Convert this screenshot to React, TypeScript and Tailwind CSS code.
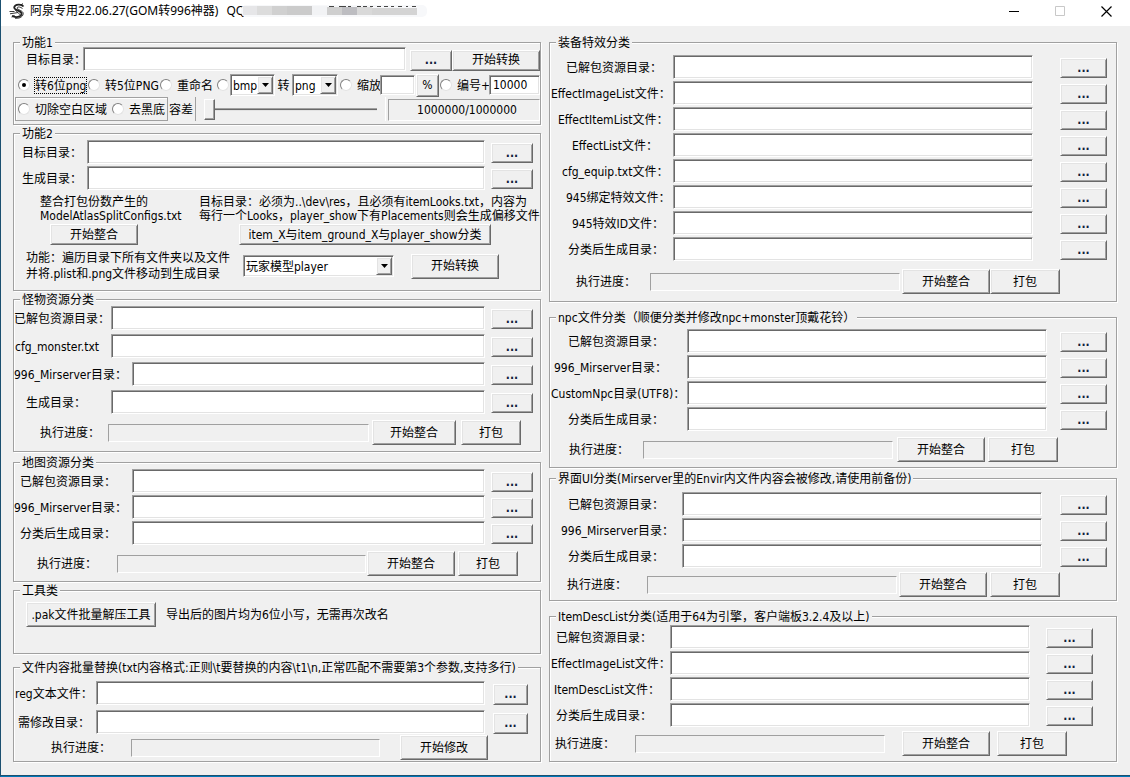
import { useId, useState } from "react";
import type { ReactNode } from "react";
import clsx from "clsx";

const raised =
  "border border-t-white border-l-white border-r-[#696969] border-b-[#696969] bg-[#f0f0f0] shadow-[inset_1px_1px_0_#e3e3e3,inset_-1px_-1px_0_#a0a0a0]";
const sunken =
  "border border-t-[#a0a0a0] border-l-[#a0a0a0] border-r-white border-b-white bg-white shadow-[inset_1px_1px_0_#696969,inset_-1px_-1px_0_#e3e3e3]";
const thinSunken =
  "border border-t-[#a0a0a0] border-l-[#a0a0a0] border-r-white border-b-white bg-[#f0f0f0]";

interface GroupProps {
  title: string;
  className?: string;
  children: ReactNode;
}

const Group = ({ title, className, children }: GroupProps) => (
  <fieldset
    className={clsx(
      "min-w-0 border border-[#a0a0a0] shadow-[1px_1px_0_#fff,inset_1px_1px_0_#fff]",
      className
    )}
  >
    <legend className="ml-1.5 h-[9px] bg-[#f0f0f0] px-0.5 leading-[11px] whitespace-nowrap">
      {title}
    </legend>
    {children}
  </fieldset>
);

interface PushButtonProps {
  className?: string;
  children: ReactNode;
}

const PushButton = ({ className, children }: PushButtonProps) => (
  <button
    type="button"
    className={clsx("shrink-0 text-center whitespace-nowrap active:bg-[#e5e5e5]", raised, className)}
  >
    {children}
  </button>
);

interface FieldProps {
  label: string;
  labelClass: string;
  browseClass: string;
}

const Field = ({ label, labelClass, browseClass }: FieldProps) => {
  const id = useId();

  return (
    <div className="flex items-center">
      <label htmlFor={id} className={clsx("shrink-0 pt-0.5 whitespace-nowrap", labelClass)}>
        {label}
      </label>
      <input id={id} type="text" className={clsx("h-6 min-w-0 flex-1 px-1 outline-none", sunken)} />
      <PushButton className={clsx("mt-0.5 font-bold text-[#10203c]", browseClass)}>...</PushButton>
    </div>
  );
};

interface ProgressRowProps {
  className: string;
  labelClass: string;
  children: ReactNode;
}

const ProgressRow = ({ className, labelClass, children }: ProgressRowProps) => {
  const id = useId();

  return (
    <div className={clsx("flex h-[25px] items-center", className)}>
      <label htmlFor={id} className={clsx("shrink-0 whitespace-nowrap", labelClass)}>
        执行进度：
      </label>
      <progress
        id={id}
        value={0}
        max={100}
        className={clsx(
          "h-[18px] min-w-0 flex-1 appearance-none [&::-webkit-progress-bar]:bg-transparent [&::-webkit-progress-value]:bg-[#0078d7]",
          thinSunken
        )}
      />
      {children}
    </div>
  );
};

interface RadioProps {
  name: string;
  className?: string;
  label?: string;
  ariaLabel?: string;
  checked: boolean;
  focused?: boolean;
  onChange: () => void;
}

const Radio = ({ name, className, label, ariaLabel, checked, focused, onChange }: RadioProps) => (
  <label className={clsx("flex shrink-0 items-center gap-1 whitespace-nowrap", className)}>
    <input
      type="radio"
      name={name}
      aria-label={ariaLabel}
      checked={checked}
      onChange={onChange}
      className="grid size-3 shrink-0 appearance-none place-items-center rounded-full border border-t-[#808080] border-r-[#e3e3e3] border-b-[#e3e3e3] border-l-[#808080] bg-white outline-none before:size-1 before:rounded-full checked:before:bg-black"
    />
    {label && (
      <span className={clsx("border border-dotted pt-px", focused ? "border-black" : "border-transparent")}>
        {label}
      </span>
    )}
  </label>
);

interface ComboProps {
  label: string;
  options: string[];
  className: string;
}

const Combo = ({ label, options, className }: ComboProps) => (
  <span className={clsx("relative flex h-[22px] shrink-0 items-stretch", className)}>
    <select aria-label={label} className={clsx("w-full appearance-none pt-0.5 pl-0.5 outline-none", sunken)}>
      {options.map((o) => (
        <option key={o}>{o}</option>
      ))}
    </select>
    <span
      className={clsx(
        "pointer-events-none absolute top-0.5 right-0.5 bottom-0.5 flex w-4 items-center justify-center",
        raised
      )}
    >
      <svg width="7" height="4" viewBox="0 0 7 4" aria-hidden="true">
        <path d="M0 0h7L3.5 4z" fill="#000" />
      </svg>
    </span>
  </span>
);

const Logo = () => (
  <svg width="17" height="17" viewBox="0 0 17 17" fill="none" stroke="#222" aria-hidden="true">
    <path
      d="M14.5 3.5C12.5.8 6 1 5.2 4.2c-.7 3 7.6 3.2 7.4 6.6-.2 3.500-6.500 4.200-9.600 2"
      strokeWidth="1.800"
    />
    <path d="M13.500 5.500C11 3.600 8.200 3.500 8.200 5c.2 2 6.300 2.500 6 5.800-.4 3.700-5.200 5-8.200 4.400" strokeWidth=".9" />
    <path d="M.5 8.500h5M1 10.800l8-1.300M6 6.800l5 4.800M3 14.500l2.500-2.500M12 2l2-1.500" strokeWidth=".9" />
  </svg>
);

const Mosaic = () => (
  <svg width="186" height="12" viewBox="0 0 186 12" aria-hidden="true">
    <rect width="186" height="12" rx="5" fill="#f7f8fa" />
    <path d="M2 1h14v9H2z" fill="#e6e6e8" />
    <path d="M16 1h15v9H16z" fill="#dcdcdc" />
    <path d="M31 1h15v9H31z" fill="#d0d0d0" />
    <path d="M46 1h25v9H46z" fill="#cbcbcb" />
    <path d="M71 1h15v9H71z" fill="#f2f3f5" />
    <path d="M86 2h15v8H86z" fill="#cfcfcf" />
    <path d="M101 2h15v8h-15z" fill="#bdbdc1" />
    <path d="M116 2h15v8h-15z" fill="#d9d9d9" />
    <path d="M131 3h45v7h-45z" fill="#d4d4d4" />
    <path
      d="M88 1.500h5M98 1.500h7M107 1.500h3M116 1.500h4M122 1.500h4M129 1.500h3M136 1.500h4M143 1.500h4M150 1.500h3M157 1.500h4M165 1.500h2M171 1.500h4"
      stroke="#444"
      strokeWidth="1"
    />
  </svg>
);

const TitleBar = () => (
  <header className="flex h-[26px] items-center bg-white pr-px pb-1 pl-2">
    <Logo />
    <h1 className="ml-1 font-['Noto_Sans','Noto_Sans_CJK_SC',sans-serif] whitespace-pre">
      阿泉专用22.06.27(GOM转996神器)
    </h1>
    <span className="ml-2 font-['Noto_Sans','Noto_Sans_CJK_SC',sans-serif]">QQ</span>
    <span className="-ml-1">
      <Mosaic />
    </span>
    <div className="ml-auto flex h-full items-center">
      <button type="button" aria-label="最小化" className="flex h-full w-[46px] items-center justify-center">
        <svg width="10" height="10" stroke="#000" aria-hidden="true">
          <path d="M0 5.500h10" />
        </svg>
      </button>
      <button type="button" aria-label="最大化" disabled className="flex h-full w-[46px] items-center justify-center">
        <svg width="10" height="10" fill="none" stroke="#c8c8c8" aria-hidden="true">
          <path d="M.5.5h9v9h-9z" />
        </svg>
      </button>
      <button type="button" aria-label="关闭" className="flex h-full w-[46px] items-center justify-center">
        <svg width="11" height="11" stroke="#000" strokeWidth="1.200" aria-hidden="true">
          <path d="M.5.5l10 10M10.500.5l-10 10" />
        </svg>
      </button>
    </div>
  </header>
);

const ConvertGroup = () => {
  const [mode, setMode] = useState("png6");
  const [trim, setTrim] = useState("");
  const [tolerance, setTolerance] = useState(0);

  return (
    <Group title="功能1" className="pb-[3px]">
      <div className="flex items-center pl-3">
        <label htmlFor="convert-dir" className="w-[57px] shrink-0 pt-0.5 whitespace-nowrap">
          目标目录：
        </label>
        <input id="convert-dir" type="text" className={clsx("h-6 min-w-0 flex-1 px-1 outline-none", sunken)} />
        <PushButton className="mt-0.5 ml-1 h-[21px] w-[42px] font-bold text-[#10203c]">...</PushButton>
        <PushButton className="mt-0.5 h-[21px] w-[88px]">开始转换</PushButton>
      </div>

      <div className="mt-[3px] flex h-[22px] items-center pl-1">
        <Radio
          name="mode"
          className="w-[70px]"
          label="转6位png"
          checked={mode === "png6"}
          focused={mode === "png6"}
          onChange={() => setMode("png6")}
        />
        <Radio
          name="mode"
          className="w-[72px]"
          label="转5位PNG"
          checked={mode === "png5"}
          onChange={() => setMode("png5")}
        />
        <Radio
          name="mode"
          className="w-[57px]"
          label="重命名"
          checked={mode === "rename"}
          onChange={() => setMode("rename")}
        />
        <Radio
          name="mode"
          className="w-[13px]"
          ariaLabel="转换格式"
          checked={mode === "format"}
          onChange={() => setMode("format")}
        />
        <Combo label="源格式" options={["bmp", "png", "jpg"]} className="w-[45px]" />
        <span className="w-[17px] shrink-0 pt-0.5 text-center">转</span>
        <Combo label="目标格式" options={["png", "bmp", "jpg"]} className="w-[46px]" />
        <Radio
          name="mode"
          className="ml-0.5 w-10"
          label="缩放"
          checked={mode === "scale"}
          onChange={() => setMode("scale")}
        />
        <input type="text" aria-label="缩放比例" className={clsx("h-5 w-[35px] shrink-0 px-1 outline-none", sunken)} />
        <PushButton className="mx-px h-[23px] w-[23px]">%</PushButton>
        <Radio
          name="mode"
          className="w-[49px]"
          label="编号+"
          checked={mode === "number"}
          onChange={() => setMode("number")}
        />
        <input
          type="text"
          aria-label="起始编号"
          defaultValue="10000"
          className={clsx("h-5 min-w-0 flex-1 px-[3px] outline-none", sunken)}
        />
      </div>

      <div className="mt-px flex h-6 items-center pl-px">
        <div className="flex h-full w-[153px] shrink-0 items-center border border-[#a0a0a0] pl-0.5 shadow-[inset_1px_1px_0_#fff]">
          <Radio
            name="trim"
            className="w-[94px]"
            label="切除空白区域"
            checked={trim === "blank"}
            onChange={() => setTrim("blank")}
          />
          <Radio
            name="trim"
            label="去黑底"
            checked={trim === "black"}
            onChange={() => setTrim("black")}
          />
        </div>
        <label htmlFor="tolerance" className="w-[27px] shrink-0 pt-0.5 pl-px whitespace-nowrap">
          容差
        </label>
        <div className="flex h-full min-w-0 flex-1 items-center border-r border-l border-r-white border-l-[#a0a0a0] px-2">
          <input
            id="tolerance"
            type="range"
            min={0}
            max={100}
            value={tolerance}
            onChange={(e) => setTolerance(Number(e.target.value))}
            className="h-[22px] w-full appearance-none bg-transparent outline-none [&::-webkit-slider-runnable-track]:h-[3px] [&::-webkit-slider-runnable-track]:border-t [&::-webkit-slider-runnable-track]:border-b [&::-webkit-slider-runnable-track]:border-t-[#a0a0a0] [&::-webkit-slider-runnable-track]:border-b-[#e3e3e3] [&::-webkit-slider-runnable-track]:bg-[#696969] [&::-webkit-slider-thumb]:-mt-[10px] [&::-webkit-slider-thumb]:h-[21px] [&::-webkit-slider-thumb]:w-[11px] [&::-webkit-slider-thumb]:appearance-none [&::-webkit-slider-thumb]:border [&::-webkit-slider-thumb]:border-t-white [&::-webkit-slider-thumb]:border-r-[#696969] [&::-webkit-slider-thumb]:border-b-[#696969] [&::-webkit-slider-thumb]:border-l-white [&::-webkit-slider-thumb]:bg-[#f0f0f0] [&::-webkit-slider-thumb]:shadow-[inset_-1px_-1px_0_#a0a0a0]"
          />
        </div>
        <output
          htmlFor="tolerance"
          className={clsx("mt-0.5 ml-0.5 h-[22px] w-[152px] shrink-0 pl-1.5 text-center leading-5", thinSunken)}
        >
          1000000/1000000
        </output>
      </div>
    </Group>
  );
};

const PackGroup = () => (
  <Group title="功能2" className="pt-0.5 pb-2">
    <div className="flex flex-col gap-0.5">
      <Field label="目标目录：" labelClass="w-[73px] pl-2" browseClass="ml-1.5 mr-[7px] h-5 w-[42px]" />
      <Field label="生成目录：" labelClass="w-[73px] pl-2" browseClass="ml-1.5 mr-[7px] h-5 w-[42px]" />
    </div>
    <div className="mt-[5px] flex pl-[26px] leading-[14px] whitespace-nowrap">
      <p className="w-[159px] shrink-0">
        整合打包份数产生的
        <br />
        ModelAtlasSplitConfigs.txt
      </p>
      <p>
        目标目录：必须为..\dev\res，且必须有itemLooks.txt，内容为
        <br />
        每行一个Looks，player_show下有Placements则会生成偏移文件
      </p>
    </div>
    <div className="mt-px flex justify-between pr-[49px] pl-9">
      <PushButton className="h-[21px] w-[88px]">开始整合</PushButton>
      <PushButton className="h-[21px] w-[252px]">item_X与item_ground_X与player_show分类</PushButton>
    </div>
    <div className="mt-[5px] flex items-center pl-3">
      <p className="w-[217px] shrink-0 leading-4 whitespace-nowrap">
        功能：遍历目录下所有文件夹以及文件
        <br />
        并将.plist和.png文件移动到生成目录
      </p>
      <Combo label="模型类型" options={["玩家模型player", "怪物模型monster"]} className="w-[151px]" />
      <PushButton className="mr-[41px] ml-auto h-[25px] w-[88px]">开始转换</PushButton>
    </div>
  </Group>
);

const MonsterGroup = () => (
  <Group title="怪物资源分类" className="mb-0.5 pt-0.5 pb-1.5">
    <div className="flex flex-col gap-1">
      <Field label="已解包资源目录：" labelClass="w-[97px]" browseClass="ml-1.5 mr-[7px] h-5 w-[42px]" />
      <Field label="cfg_monster.txt" labelClass="w-[97px] pl-px" browseClass="ml-1.5 mr-[7px] h-5 w-[42px]" />
      <Field label="996_Mirserver目录：" labelClass="w-[118px]" browseClass="ml-1.5 mr-[7px] h-5 w-[42px]" />
      <Field label="生成目录：" labelClass="w-[97px] pl-3" browseClass="ml-1.5 mr-[7px] h-5 w-[42px]" />
    </div>
    <ProgressRow className="mt-1.5 pr-[19px]" labelClass="w-[94px] pl-[26px]">
      <PushButton className="ml-[3px] h-full w-[84px]">开始整合</PushButton>
      <PushButton className="ml-[5px] h-full w-[60px]">打包</PushButton>
    </ProgressRow>
  </Group>
);

const MapGroup = () => (
  <Group title="地图资源分类" className="pt-0.5 pb-[5px]">
    <div className="flex flex-col gap-0.5">
      <Field label="已解包资源目录：" labelClass="w-[118px] pl-1.5" browseClass="ml-1.5 mr-[7px] h-5 w-[42px]" />
      <Field label="996_Mirserver目录：" labelClass="w-[118px]" browseClass="ml-1.5 mr-[7px] h-5 w-[42px]" />
      <Field label="分类后生成目录：" labelClass="w-[118px] pl-1.5" browseClass="ml-1.5 mr-[7px] h-5 w-[42px]" />
    </div>
    <ProgressRow className="mt-1.5 pr-[22px]" labelClass="w-[103px] pl-[23px]">
      <PushButton className="ml-px h-full w-[88px]">开始整合</PushButton>
      <PushButton className="ml-[3px] h-full w-[60px]">打包</PushButton>
    </ProgressRow>
  </Group>
);

const ToolGroup = () => (
  <Group title="工具类" className="mb-[5px] pt-[7px] pb-[26px]">
    <div className="flex items-center pl-3">
      <PushButton className="h-[25px] w-[130px]">.pak文件批量解压工具</PushButton>
      <p className="ml-2.5">导出后的图片均为6位小写，无需再次改名</p>
    </div>
  </Group>
);

const ReplaceGroup = () => (
  <Group
    title="文件内容批量替换(txt内容格式:正则\t要替换的内容\t1\n,正常匹配不需要第3个参数,支持多行)"
    className="pt-[9px] pb-px"
  >
    <div className="flex flex-col gap-[5px]">
      <Field label="reg文本文件：" labelClass="w-[82px] pl-px" browseClass="ml-2 mr-3 h-[21px] w-[35px]" />
      <Field label="需修改目录：" labelClass="w-[82px] pl-1" browseClass="ml-2 mr-3 h-[21px] w-[35px]" />
    </div>
    <ProgressRow className="mt-px pr-[52px]" labelClass="w-[117px] pl-[37px]">
      <PushButton className="ml-5 h-full w-[88px]">开始修改</PushButton>
    </ProgressRow>
  </Group>
);

const EffectGroup = () => (
  <Group title="装备特效分类" className="mb-[5px] pt-2 pb-[7px]">
    <div className="flex flex-col gap-0.5">
      <Field label="已解包资源目录：" labelClass="w-[123px] pl-4" browseClass="ml-[27px] mr-[9px] h-5 w-[47px]" />
      <Field label="EffectImageList文件：" labelClass="w-[123px] pl-px" browseClass="ml-[27px] mr-[9px] h-5 w-[47px]" />
      <Field label="EffectItemList文件：" labelClass="w-[123px] pl-2" browseClass="ml-[27px] mr-[9px] h-5 w-[47px]" />
      <Field label="EffectList文件：" labelClass="w-[123px] pl-[22px]" browseClass="ml-[27px] mr-[9px] h-5 w-[47px]" />
      <Field label="cfg_equip.txt文件：" labelClass="w-[123px] pl-3" browseClass="ml-[27px] mr-[9px] h-5 w-[47px]" />
      <Field label="945绑定特效文件：" labelClass="w-[123px] pl-4" browseClass="ml-[27px] mr-[9px] h-5 w-[47px]" />
      <Field label="945特效ID文件：" labelClass="w-[123px] pl-[22px]" browseClass="ml-[27px] mr-[9px] h-5 w-[47px]" />
      <Field label="分类后生成目录：" labelClass="w-[123px] pl-[18px]" browseClass="ml-[27px] mr-[9px] h-5 w-[47px]" />
    </div>
    <ProgressRow className="mt-2 pr-14" labelClass="w-[100px] pl-[26px]">
      <PushButton className="ml-0.5 h-full w-[88px]">开始整合</PushButton>
      <PushButton className="h-full w-[70px]">打包</PushButton>
    </ProgressRow>
  </Group>
);

const NpcGroup = () => (
  <Group title="npc文件分类（顺便分类并修改npc+monster顶戴花铃）" className="pt-[7px] pb-[5px]">
    <div className="flex flex-col gap-0.5">
      <Field label="已解包资源目录：" labelClass="w-[137px] pl-[18px]" browseClass="ml-[13px] mr-[9px] h-5 w-[47px]" />
      <Field label="996_Mirserver目录：" labelClass="w-[137px] pl-1" browseClass="ml-[13px] mr-[9px] h-5 w-[47px]" />
      <Field label="CustomNpc目录(UTF8)：" labelClass="w-[137px] pl-px" browseClass="ml-[13px] mr-[9px] h-5 w-[47px]" />
      <Field label="分类后生成目录：" labelClass="w-[137px] pl-[18px]" browseClass="ml-[13px] mr-[9px] h-5 w-[47px]" />
    </div>
    <ProgressRow className="mt-1.5 pr-[58px]" labelClass="w-[93px] pl-[19px]">
      <PushButton className="ml-1 h-full w-[88px]">开始整合</PushButton>
      <PushButton className="ml-[3px] h-full w-[70px]">打包</PushButton>
    </ProgressRow>
  </Group>
);

const UiGroup = () => (
  <Group title="界面UI分类(Mirserver里的Envir内文件内容会被修改,请使用前备份)" className="mb-[5px] pt-[9px] pb-[3px]">
    <div className="flex flex-col gap-0.5">
      <Field label="已解包资源目录：" labelClass="w-[132px] pl-[18px]" browseClass="ml-[18px] mr-[9px] h-5 w-[47px]" />
      <Field label="996_Mirserver目录：" labelClass="w-[132px] pl-[11px]" browseClass="ml-[18px] mr-[9px] h-5 w-[47px]" />
      <Field label="分类后生成目录：" labelClass="w-[132px] pl-[18px]" browseClass="ml-[18px] mr-[9px] h-5 w-[47px]" />
    </div>
    <ProgressRow className="mt-1 pr-14" labelClass="w-[97px] pl-[17px]">
      <PushButton className="ml-0.5 h-full w-[88px]">开始整合</PushButton>
      <PushButton className="ml-[3px] h-full w-[70px]">打包</PushButton>
    </ProgressRow>
  </Group>
);

const ItemDescGroup = () => (
  <Group title="ItemDescList分类(适用于64为引擎，客户端板3.2.4及以上)" className="pt-1 pb-[5px]">
    <div className="flex flex-col gap-0.5">
      <Field label="已解包资源目录：" labelClass="w-[120px] pl-1.5" browseClass="ml-4 mr-[23px] h-5 w-[47px]" />
      <Field label="EffectImageList文件：" labelClass="w-[120px] pl-px" browseClass="ml-4 mr-[23px] h-5 w-[47px]" />
      <Field label="ItemDescList文件：" labelClass="w-[120px] pl-1" browseClass="ml-4 mr-[23px] h-5 w-[47px]" />
      <Field label="分类后生成目录：" labelClass="w-[120px] pl-1.5" browseClass="ml-4 mr-[23px] h-5 w-[47px]" />
    </div>
    <ProgressRow className="mt-1 pr-[49px]" labelClass="w-[85px] pl-[5px]">
      <PushButton className="ml-[17px] h-full w-[88px]">开始整合</PushButton>
      <PushButton className="ml-[7px] h-full w-[70px]">打包</PushButton>
    </ProgressRow>
  </Group>
);

const App = () => (
  <div className="flex min-h-screen flex-col border-b border-l border-b-[#0078b8] border-l-[#1b5070] bg-[#f0f0f0] font-['DejaVu_Sans_Condensed','Noto_Sans_CJK_SC',sans-serif] text-[12px] leading-[14px] text-black">
    <TitleBar />
    <main className="grid flex-1 grid-cols-[528fr_568fr] items-start gap-2 border-b border-[#1b5070] pt-3 pr-[13px] pb-[13px] pl-3">
      <div className="flex min-w-0 flex-col gap-1">
        <ConvertGroup />
        <PackGroup />
        <MonsterGroup />
        <MapGroup />
        <ToolGroup />
        <ReplaceGroup />
      </div>
      <div className="flex min-w-0 flex-col gap-1.5">
        <EffectGroup />
        <NpcGroup />
        <UiGroup />
        <ItemDescGroup />
      </div>
    </main>
  </div>
);

export default App;
